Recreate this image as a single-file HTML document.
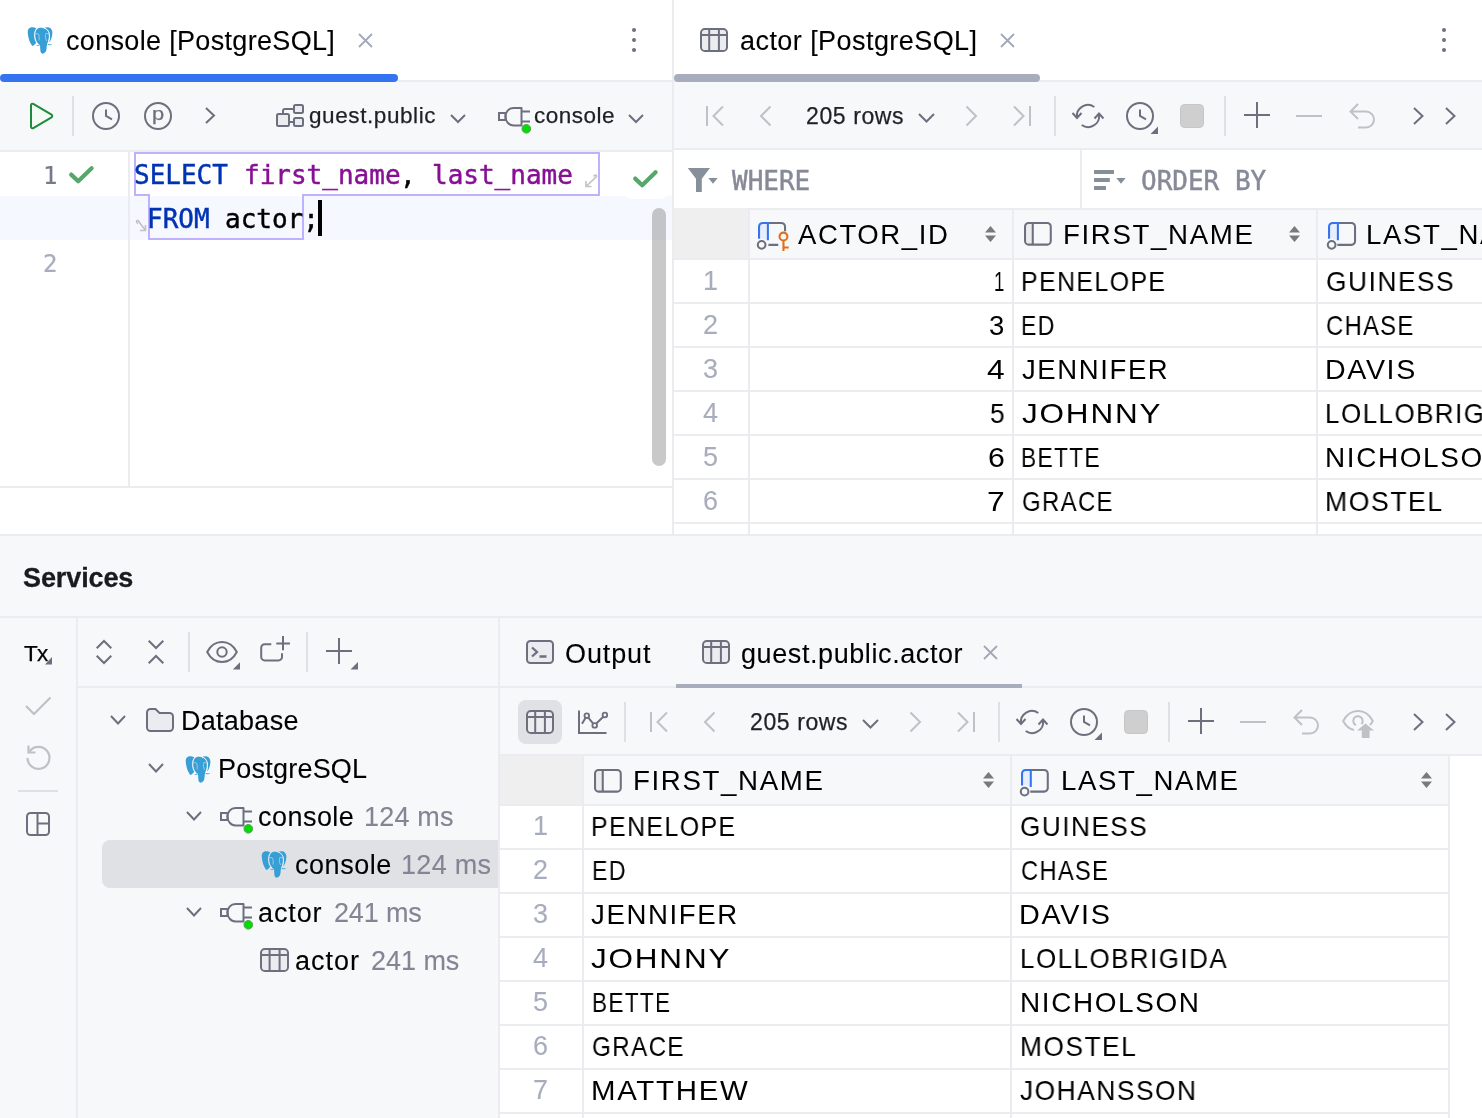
<!DOCTYPE html><html><head><meta charset="utf-8"><title>DataGrip</title><style>
*{box-sizing:border-box;margin:0;padding:0}
html,body{width:1482px;height:1118px;overflow:hidden;background:#fff}
body{position:relative;font-family:"Liberation Sans",sans-serif;color:#000;-webkit-font-smoothing:antialiased}
.a{position:absolute}
.t{position:absolute;white-space:pre;line-height:1;will-change:transform}
.ui{font-size:26px}
.mono{font-family:"Liberation Mono",monospace}
.h{font-family:"Liberation Sans",sans-serif;font-size:27px;letter-spacing:1.2px;color:#000}
.rn{font-family:"Liberation Sans",sans-serif;font-size:26px;color:#a8adbd}
svg{position:absolute;overflow:visible}
</style></head><body>
<div class="a" style="left:0px;top:82px;width:1482px;height:68px;background:#f7f8fa;"></div>
<div class="a" style="left:0px;top:150px;width:672px;height:2px;background:#ebecf0;"></div>
<div class="a" style="left:674px;top:148px;width:808px;height:2px;background:#ebecf0;"></div>
<div class="a" style="left:674px;top:150px;width:808px;height:2px;background:#fff;"></div>
<div class="a" style="left:672px;top:0px;width:2px;height:536px;background:#ebecf0;"></div>
<div class="a" style="left:398px;top:80px;width:1084px;height:2px;background:#ebecf0;"></div>
<div class="a" style="left:0px;top:74px;width:398px;height:8px;background:#3574f0;border-radius:4px"></div>
<div class="a" style="left:674px;top:74px;width:366px;height:8px;background:#a8adbd;border-radius:4px"></div>
<svg style="left:27px;top:26.7px" width="26.0" height="27.0" viewBox="0 0 26 27" fill="none"><g fill="#389fd6">
<path d="M5 .3C2 .3.5 2.5.8 6c.4 5 2.2 10.5 4.7 13 1.5-.5 3-2.500 3.800-3.500C7.500 13 7 9 7.500 6c.3-2 1-3.500 2-4.500C8 .6 6.500.3 5 .3z"/>
<path d="M13.500.8C10.500.8 8.300 3.500 8.200 7.500 8.100 11 9 14 11 16.500l2 1.500c.2 2 .2 4 .4 6 .3 2 1.600 2.800 2.800 2.600 1.800-.3 3.100-2.100 3.300-4.600.2-2 .3-4 .8-5.500 1.200-2.500 2.200-6.500 1.500-10C21 3 17.500.8 13.500.8z"/>
<path d="M17.500.8c1.500-.8 4.500-.8 6 .4 2 1.600 2.300 4.300 1.500 7.800-.5 2.500-1.500 5-2.800 6.500.8-3.500 1.100-7 .3-9.500C21.800 3.500 19.500 1.500 17.500.8z"/>
<path d="M8.500 18.600c1.500 0 3-.7 4-1.300l.3 1c-1 .8-2.800 1-4.300.3zM20.800 16.800c1.200.7 3 .8 4.400.2-.7 1.300-3.200 1.600-4.600.8z"/>
</g>
<g stroke="#fff" stroke-width=".55" fill="none" opacity=".85">
<path d="M9.600 1.600C8 3.300 7.200 6 7.400 9c.2 2.500.8 4.800 2 6.600l1.500 1.300M7.900 7.600c.8-1.300 3.100-1.400 3.900 0 .5 1.500.5 4.500.2 6"/>
<path d="M17.300.9c2.200.8 4 2.600 4.700 5 .7 2.800.3 6.500-.8 9.600l-.8 1.200M18 7.300c1-1.100 3-1 3.500.2M18.600 7.500c-.5 1.500 0 4.500 1 6.500"/>
</g></svg>
<div class="t" style="left:66.05px;top:28.34px;font-family:'Liberation Sans',sans-serif;font-size:27px;color:#000;-webkit-text-stroke:0.1px #000;letter-spacing:0.328px;">console [PostgreSQL]</div>
<svg style="left:359.1px;top:33.6px" width="13.0" height="13.0" viewBox="0 0 13.0 13.0" fill="none"><path d="M0 0L13.0 13.0M13.0 0L0 13.0" stroke="#a3a8b8" stroke-width="1.8"/></svg>
<svg style="left:631px;top:27px" width="6" height="26" viewBox="0 0 6 26" fill="none"><circle cx="3" cy="3" r="2" fill="#6c707e"/><circle cx="3" cy="13" r="2" fill="#6c707e"/><circle cx="3" cy="23" r="2" fill="#6c707e"/></svg>
<svg style="left:700px;top:28px" width="28" height="24" viewBox="0 0 28 24" fill="none"><rect x="1" y="1" width="26" height="22" rx="3.800" fill="#ebecf0" stroke="#6c707e" stroke-width="2"/><path d="M1 7H27M9.2 1V23M18.9 1V23" stroke="#6c707e" stroke-width="2"/></svg>
<div class="t" style="left:739.85px;top:28.34px;font-family:'Liberation Sans',sans-serif;font-size:27px;color:#000;-webkit-text-stroke:0.1px #000;letter-spacing:0.439px;">actor [PostgreSQL]</div>
<svg style="left:1001.1px;top:33.6px" width="13.0" height="13.0" viewBox="0 0 13.0 13.0" fill="none"><path d="M0 0L13.0 13.0M13.0 0L0 13.0" stroke="#a3a8b8" stroke-width="1.8"/></svg>
<svg style="left:1441px;top:27px" width="6" height="26" viewBox="0 0 6 26" fill="none"><circle cx="3" cy="3" r="2" fill="#6c707e"/><circle cx="3" cy="13" r="2" fill="#6c707e"/><circle cx="3" cy="23" r="2" fill="#6c707e"/></svg>
<svg style="left:28px;top:101px" width="27" height="30" viewBox="0 0 27 30" fill="none"><path d="M3 4.200V25.800a1.500 1.500 0 0 0 2.300 1.300L23.500 16.300a1.500 1.500 0 0 0 0-2.600L5.300 2.900A1.500 1.500 0 0 0 3 4.200z" fill="#f2fcf3" stroke="#208a3c" stroke-width="2" stroke-linejoin="round"/></svg>
<div class="a" style="left:72px;top:96px;width:2px;height:40px;background:#dfe1e7;"></div>
<svg style="left:92px;top:102px" width="28" height="28" viewBox="0 0 28 28" fill="none"><circle cx="14" cy="14" r="13" stroke="#6c707e" stroke-width="2"/><path d="M14 7.500V14l6 3.300" stroke="#6c707e" stroke-width="2"/></svg>
<svg style="left:144px;top:102px" width="28" height="28" viewBox="0 0 28 28" fill="none"><circle cx="14" cy="14" r="13" stroke="#6c707e" stroke-width="2"/></svg>
<div class="t" style="left:151.60px;top:105.98px;font-family:'Liberation Sans',sans-serif;font-size:17.5px;color:#6c707e;-webkit-text-stroke:0.25px #6c707e;transform-origin:0 0;transform:scaleX(1.25);">p</div>
<svg style="left:205.5px;top:108.1px" width="8" height="15" viewBox="0 0 8 15" fill="none"><path d="M0 0L8 7.5L0 15" stroke="#6c707e" stroke-width="2" stroke-linejoin="miter"/></svg>
<svg style="left:276px;top:102px" width="28" height="28" viewBox="0 0 28 28" fill="none"><rect x="1" y="12" width="12" height="12" rx="1.500" fill="#ebecf0" stroke="#6c707e" stroke-width="2"/><rect x="18" y="3" width="9" height="8" rx="1.500" fill="#ebecf0" stroke="#6c707e" stroke-width="2"/><rect x="18" y="16" width="9" height="8" rx="1.500" fill="#ebecf0" stroke="#6c707e" stroke-width="2"/><path d="M7 12V9a2 2 0 0 1 2-2h9M13 20h5" stroke="#6c707e" stroke-width="2"/></svg>
<div class="t" style="left:309.06px;top:105.35px;font-family:'Liberation Sans',sans-serif;font-size:22.5px;color:#1f2024;-webkit-text-stroke:0.25px #1f2024;letter-spacing:0.587px;">guest.public</div>
<svg style="left:451px;top:114.5px" width="14" height="7" viewBox="0 0 14 7" fill="none"><path d="M0 0L7.0 7L14 0" stroke="#6c707e" stroke-width="2"/></svg>
<svg style="left:498px;top:106.5px" width="32" height="27" viewBox="0 0 32 27" fill="none"><rect x="1" y="6" width="6.500" height="7" stroke="#6c707e" stroke-width="2"/><path d="M23.500 1H15.500C10.500 1 7.500 5 7.500 9.500S10.500 18.500 15.500 18.500H23.500z" stroke="#6c707e" stroke-width="2" stroke-linejoin="round"/><path d="M23.500 4.500H32M23.500 14.500H32" stroke="#6c707e" stroke-width="2"/><circle cx="28.300" cy="21.800" r="4.300" fill="#00dd00" stroke="#5c9c5c" stroke-width="1"/></svg>
<div class="t" style="left:534.04px;top:105.35px;font-family:'Liberation Sans',sans-serif;font-size:22.5px;color:#1f2024;-webkit-text-stroke:0.25px #1f2024;letter-spacing:0.484px;">console</div>
<svg style="left:629px;top:114.5px" width="14" height="7" viewBox="0 0 14 7" fill="none"><path d="M0 0L7.0 7L14 0" stroke="#6c707e" stroke-width="2"/></svg>
<div class="a" style="left:0px;top:196px;width:672px;height:44px;background:#f5f8fe;"></div>
<div class="a" style="left:128px;top:152px;width:2px;height:334px;background:#ebecf0;"></div>
<div class="a" style="left:0px;top:486px;width:672px;height:2px;background:#ebecf0;"></div>
<svg style="left:0px;top:0px" width="700" height="300" viewBox="0 0 700 300" fill="none"><path d="M135 153H599V195H303V239H149V195H135z" stroke="#bfb1fb" stroke-width="2" fill="none"/></svg>
<div class="t" style="left:134.20px;top:161.70px;font-family:'DejaVu Sans Mono','Liberation Mono',monospace;font-size:26px;color:#0033b3;-webkit-text-stroke:0.45px #0033b3;">SELECT</div>
<div class="t" style="left:243.77px;top:161.70px;font-family:'DejaVu Sans Mono','Liberation Mono',monospace;font-size:26px;color:#871094;-webkit-text-stroke:0.45px #871094;">first_name</div>
<div class="t" style="left:400.30px;top:161.70px;font-family:'DejaVu Sans Mono','Liberation Mono',monospace;font-size:26px;color:#000;-webkit-text-stroke:0.45px #000;">,</div>
<div class="t" style="left:431.61px;top:161.70px;font-family:'DejaVu Sans Mono','Liberation Mono',monospace;font-size:26px;color:#871094;-webkit-text-stroke:0.45px #871094;">last_name</div>
<div class="t" style="left:147.20px;top:205.70px;font-family:'DejaVu Sans Mono','Liberation Mono',monospace;font-size:26px;color:#0033b3;-webkit-text-stroke:0.45px #0033b3;">FROM</div>
<div class="t" style="left:225.47px;top:205.70px;font-family:'DejaVu Sans Mono','Liberation Mono',monospace;font-size:26px;color:#000;-webkit-text-stroke:0.45px #000;">actor;</div>
<div class="a" style="left:318px;top:200px;width:4px;height:36px;background:#000;"></div>
<div class="t" style="left:42.50px;top:163.69px;font-family:'DejaVu Sans Mono','Liberation Mono',monospace;font-size:24px;color:#767a8a;-webkit-text-stroke:0.2px #767a8a;">1</div>
<div class="t" style="left:42.50px;top:251.69px;font-family:'DejaVu Sans Mono','Liberation Mono',monospace;font-size:24px;color:#a8adbd;-webkit-text-stroke:0.2px #a8adbd;">2</div>
<svg style="left:69px;top:166px" width="25" height="18" viewBox="0 0 25 18" fill="none"><path d="M2.200 8.600L9.200 15.200L22.600 2.200" stroke="#55a76a" stroke-width="4.2" stroke-linecap="round" stroke-linejoin="round" fill="none"/></svg>
<div class="a" style="left:624px;top:152px;width:44px;height:47px;background:#fff;border-radius:0 0 8px 8px"></div>
<svg style="left:633px;top:169.9px" width="25" height="18" viewBox="0 0 25 18" fill="none"><path d="M2.200 8.600L9.200 15.200L22.600 2.200" stroke="#55a76a" stroke-width="4.2" stroke-linecap="round" stroke-linejoin="round" fill="none"/></svg>
<svg style="left:584px;top:174px" width="14" height="14" viewBox="0 0 14 14" fill="none"><path d="M9.500 2.500C10.500 .500 13 .500 12.500 2.500L2 12.500M2 7V12.500H7.500" stroke="#c2c2c4" stroke-width="1.600" fill="none"/></svg>
<svg style="left:135px;top:219px" width="12" height="13" viewBox="0 0 12 13" fill="none"><path d="M3 4.500C1 3.500 1 1 3 1.500L10.500 11.500M10.500 6V11.500H5" stroke="#c2c2c4" stroke-width="1.600" fill="none"/></svg>
<div class="a" style="left:652px;top:208px;width:14px;height:258px;background:rgba(100,100,100,.35);border-radius:7px"></div>
<svg style="left:706px;top:106px" width="18" height="20" viewBox="0 0 18 20" fill="none"><path d="M1 0V20M17 .500L7.500 10L17 19.500" stroke="#c0c1c6" stroke-width="2"/></svg>
<svg style="left:760px;top:106px" width="11" height="20" viewBox="0 0 11 20" fill="none"><path d="M10.500 .500L1 10L10.500 19.500" stroke="#c0c1c6" stroke-width="2"/></svg>
<div class="t" style="left:805.84px;top:105.33px;font-family:'Liberation Sans',sans-serif;font-size:23px;color:#1f2024;-webkit-text-stroke:0.25px #1f2024;letter-spacing:0.595px;">205 rows</div>
<svg style="left:918.5px;top:114.25px" width="15" height="7.5" viewBox="0 0 15 7.5" fill="none"><path d="M0 0L7.5 7.5L15 0" stroke="#6c707e" stroke-width="2"/></svg>
<svg style="left:965.5px;top:106px" width="11" height="20" viewBox="0 0 11 20" fill="none"><path d="M.500 .500L10 10L.500 19.500" stroke="#c0c1c6" stroke-width="2"/></svg>
<svg style="left:1013px;top:106px" width="18" height="20" viewBox="0 0 18 20" fill="none"><path d="M17 0V20M1 .500L10.500 10L1 19.500" stroke="#c0c1c6" stroke-width="2"/></svg>
<div class="a" style="left:1054px;top:96px;width:2px;height:40px;background:#dfe1e7;"></div>
<svg style="left:1072px;top:102px" width="32" height="28" viewBox="0 0 32 28" fill="none"><path d="M22.300 5A11 11 0 0 0 5 15.500M9.700 23A11 11 0 0 0 27 12.500" stroke="#6c707e" stroke-width="2" fill="none"/><path d="M.500 11L5 16L9.500 11M22.500 16.500L27 11.500L31.500 16.500" stroke="#6c707e" stroke-width="2" fill="none"/></svg>
<svg style="left:1126px;top:102px" width="28" height="28" viewBox="0 0 28 28" fill="none"><circle cx="14" cy="14" r="13" stroke="#6c707e" stroke-width="2"/><path d="M14 7.500V14l6 3.300" stroke="#6c707e" stroke-width="2"/><path d="M32 24.500V32h-7.500z" fill="#6c707e"/></svg>
<div class="a" style="left:1180px;top:104px;width:24px;height:24px;background:#cfcfcf;border-radius:4.500px;border:1.500px solid #c6c6c6"></div>
<div class="a" style="left:1224px;top:96px;width:2px;height:40px;background:#dfe1e7;"></div>
<svg style="left:1244px;top:102px" width="26" height="26" viewBox="0 0 26 26" fill="none"><path d="M13 0V26M0 13H26" stroke="#6c707e" stroke-width="2"/></svg>
<div class="a" style="left:1296px;top:114.5px;width:26px;height:2px;background:#c0c1c6;"></div>
<svg style="left:1349px;top:102.5px" width="27" height="26" viewBox="0 0 27 26" fill="none"><path d="M9 1L1.500 8.500L9 16M1.500 8.500H17A8 8 0 0 1 17 24.500H9" stroke="#c0c1c6" stroke-width="2" fill="none"/></svg>
<svg style="left:1413.5px;top:108.0px" width="8.5" height="16" viewBox="0 0 8.5 16" fill="none"><path d="M0 0L8.5 8.0L0 16" stroke="#6c707e" stroke-width="2" stroke-linejoin="miter"/></svg>
<svg style="left:1445.5px;top:108.0px" width="8.5" height="16" viewBox="0 0 8.5 16" fill="none"><path d="M0 0L8.5 8.0L0 16" stroke="#6c707e" stroke-width="2" stroke-linejoin="miter"/></svg>
<svg style="left:687px;top:168px" width="32" height="25" viewBox="0 0 32 25" fill="none"><path d="M.800 0H23L14.800 10.800V24H9V10.800z" fill="#868f9a"/><path d="M21.300 10H30.700L26 15.800z" fill="#868f9a"/></svg>
<div class="t" style="left:732.00px;top:167.70px;font-family:'DejaVu Sans Mono','Liberation Mono',monospace;font-size:26px;color:#868a98;-webkit-text-stroke:0.45px #868a98;">WHERE</div>
<div class="a" style="left:1080px;top:150px;width:2px;height:58px;background:#ebecf0;"></div>
<svg style="left:1094px;top:170px" width="33" height="20" viewBox="0 0 33 20" fill="none"><path d="M0 0H20V4H0zM0 8H15.800V12H0zM0 16H12V20H0zM22.300 8H31.700L27 13.800z" fill="#868f9a"/></svg>
<div class="t" style="left:1141.00px;top:167.70px;font-family:'DejaVu Sans Mono','Liberation Mono',monospace;font-size:26px;color:#868a98;-webkit-text-stroke:0.45px #868a98;">ORDER BY</div>
<div class="a" style="left:674px;top:208px;width:808px;height:2px;background:#ebecf0;"></div>
<div class="a" style="left:674px;top:210px;width:808px;height:48px;background:#f7f8fa;"></div>
<div class="a" style="left:674px;top:208px;width:74px;height:50px;background:#efefef;"></div>
<div class="a" style="left:674px;top:258px;width:808px;height:2px;background:#ebecf0;"></div>
<div class="a" style="left:674px;top:302px;width:808px;height:2px;background:#ebecf0;"></div>
<div class="a" style="left:674px;top:346px;width:808px;height:2px;background:#ebecf0;"></div>
<div class="a" style="left:674px;top:390px;width:808px;height:2px;background:#ebecf0;"></div>
<div class="a" style="left:674px;top:434px;width:808px;height:2px;background:#ebecf0;"></div>
<div class="a" style="left:674px;top:478px;width:808px;height:2px;background:#ebecf0;"></div>
<div class="a" style="left:674px;top:522px;width:808px;height:2px;background:#ebecf0;"></div>
<div class="a" style="left:748px;top:208px;width:2px;height:328px;background:#ebecf0;"></div>
<div class="a" style="left:1012px;top:208px;width:2px;height:328px;background:#ebecf0;"></div>
<div class="a" style="left:1316px;top:208px;width:2px;height:328px;background:#ebecf0;"></div>
<svg style="left:758px;top:221.5px" width="28.080000000000002" height="23.92" viewBox="0 0 27 23" fill="none"><path d="M1 15V4.500A3.500 3.500 0 0 1 4.500 1H9.500V17H7" fill="#e7effd"/><path d="M9.500 1H22.500A3.500 3.500 0 0 1 26 4.500V9M19.500 22H10" stroke="#6c707e" stroke-width="2"/><path d="M1 16V4.500A3.500 3.500 0 0 1 4.500 1H9.500V17.500" stroke="#3574f0" stroke-width="2" fill="none"/><circle cx="3.500" cy="22" r="3.700" fill="#f7f8fa" stroke="#6c707e" stroke-width="2"/><circle cx="24.500" cy="14" r="3.800" fill="#f7f8fa" stroke="#e66d17" stroke-width="2"/><path d="M24.500 18V28M24.500 24.500H29.500" stroke="#e66d17" stroke-width="2"/></svg>
<div class="t" style="left:797.95px;top:221.32px;font-family:'Liberation Sans',sans-serif;font-size:27.5px;color:#000;letter-spacing:1.600px;transform-origin:0 0;transform:scaleX(1.0008);">ACTOR_ID</div>
<svg style="left:984.5px;top:226px" width="11" height="16" viewBox="0 0 11 16" fill="none"><path d="M5.500 0L11 6.500H0zM5.500 16L0 9.500H11z" fill="#7a7a7a"/></svg>
<svg style="left:1023.8px;top:222px" width="27.810000000000002" height="23.69" viewBox="0 0 27 23" fill="none"><path d="M1 4.500A3.500 3.500 0 0 1 4.500 1H8.500V22H4.500A3.500 3.500 0 0 1 1 18.500z" fill="#ebecf0"/><rect x="1" y="1" width="25" height="21" rx="3.500" stroke="#6c707e" stroke-width="2"/><path d="M8.500 1V22" stroke="#6c707e" stroke-width="2"/></svg>
<div class="t" style="left:1062.73px;top:221.32px;font-family:'Liberation Sans',sans-serif;font-size:27.5px;color:#000;letter-spacing:1.600px;transform-origin:0 0;transform:scaleX(1.0073);">FIRST_NAME</div>
<svg style="left:1288.5px;top:226px" width="11" height="16" viewBox="0 0 11 16" fill="none"><path d="M5.500 0L11 6.500H0zM5.500 16L0 9.500H11z" fill="#7a7a7a"/></svg>
<svg style="left:1328px;top:221.8px" width="28.080000000000002" height="23.92" viewBox="0 0 27 23" fill="none"><path d="M1 15V4.500A3.500 3.500 0 0 1 4.500 1H9.500V17H7" fill="#e7effd"/><path d="M9.500 1H22.500A3.500 3.500 0 0 1 26 4.500V18.5A3.500 3.500 0 0 1 22.500 22H9" stroke="#6c707e" stroke-width="2"/><path d="M1 16V4.500A3.500 3.500 0 0 1 4.500 1H9.500V17.500" stroke="#3574f0" stroke-width="2" fill="none"/><circle cx="3.500" cy="22" r="3.700" fill="#f7f8fa" stroke="#6c707e" stroke-width="2"/></svg>
<div class="a" style="left:1360px;top:205px;width:122px;height:55px;overflow:hidden">
<div class="t" style="left:6.34px;top:16.32px;font-family:'Liberation Sans',sans-serif;font-size:27.5px;color:#000;letter-spacing:1.600px;transform-origin:0 0;transform:scaleX(1.0035);">LAST_NAME</div>
</div>
<div class="a" style="left:674px;top:260px;width:808px;height:274px;overflow:hidden">
<div class="t" style="left:29.49px;top:8.14px;font-family:'Liberation Sans',sans-serif;font-size:27px;color:#a8adbd;-webkit-text-stroke:0.1px #a8adbd;">1</div>
<div class="t" style="left:320.09px;top:7.72px;font-family:'Liberation Sans',sans-serif;font-size:27.5px;color:#000;letter-spacing:1.600px;transform-origin:0 0;transform:scaleX(0.6747);">1</div>
<div class="t" style="left:347.26px;top:7.72px;font-family:'Liberation Sans',sans-serif;font-size:27.5px;color:#000;letter-spacing:1.600px;transform-origin:0 0;transform:scaleX(0.9031);">PENELOPE</div>
<div class="t" style="left:652.08px;top:7.72px;font-family:'Liberation Sans',sans-serif;font-size:27.5px;color:#000;letter-spacing:1.600px;transform-origin:0 0;transform:scaleX(0.9569);">GUINESS</div>
<div class="t" style="left:29.49px;top:52.14px;font-family:'Liberation Sans',sans-serif;font-size:27px;color:#a8adbd;-webkit-text-stroke:0.1px #a8adbd;">2</div>
<div class="t" style="left:315.46px;top:51.72px;font-family:'Liberation Sans',sans-serif;font-size:27.5px;color:#000;letter-spacing:1.600px;transform-origin:0 0;transform:scaleX(0.9971);">3</div>
<div class="t" style="left:347.41px;top:51.72px;font-family:'Liberation Sans',sans-serif;font-size:27.5px;color:#000;letter-spacing:1.600px;transform-origin:0 0;transform:scaleX(0.8363);">ED</div>
<div class="t" style="left:652.19px;top:51.72px;font-family:'Liberation Sans',sans-serif;font-size:27.5px;color:#000;letter-spacing:1.600px;transform-origin:0 0;transform:scaleX(0.8634);">CHASE</div>
<div class="t" style="left:29.49px;top:96.14px;font-family:'Liberation Sans',sans-serif;font-size:27px;color:#a8adbd;-webkit-text-stroke:0.1px #a8adbd;">3</div>
<div class="t" style="left:312.77px;top:95.72px;font-family:'Liberation Sans',sans-serif;font-size:27.5px;color:#000;letter-spacing:1.600px;transform-origin:0 0;transform:scaleX(1.1546);">4</div>
<div class="t" style="left:347.57px;top:95.72px;font-family:'Liberation Sans',sans-serif;font-size:27.5px;color:#000;letter-spacing:1.600px;transform-origin:0 0;transform:scaleX(1.0004);">JENNIFER</div>
<div class="t" style="left:651.06px;top:95.72px;font-family:'Liberation Sans',sans-serif;font-size:27.5px;color:#000;letter-spacing:1.600px;transform-origin:0 0;transform:scaleX(1.0388);">DAVIS</div>
<div class="t" style="left:29.49px;top:140.14px;font-family:'Liberation Sans',sans-serif;font-size:27px;color:#a8adbd;-webkit-text-stroke:0.1px #a8adbd;">4</div>
<div class="t" style="left:315.94px;top:139.72px;font-family:'Liberation Sans',sans-serif;font-size:27.5px;color:#000;letter-spacing:1.600px;transform-origin:0 0;transform:scaleX(0.9587);">5</div>
<div class="t" style="left:347.51px;top:139.72px;font-family:'Liberation Sans',sans-serif;font-size:27.5px;color:#000;letter-spacing:1.600px;transform-origin:0 0;transform:scaleX(1.1439);">JOHNNY</div>
<div class="t" style="left:651.27px;top:139.72px;font-family:'Liberation Sans',sans-serif;font-size:27.5px;color:#000;letter-spacing:1.600px;transform-origin:0 0;transform:scaleX(0.9423);">LOLLOBRIGIDA</div>
<div class="t" style="left:29.49px;top:184.14px;font-family:'Liberation Sans',sans-serif;font-size:27px;color:#a8adbd;-webkit-text-stroke:0.1px #a8adbd;">5</div>
<div class="t" style="left:313.96px;top:183.72px;font-family:'Liberation Sans',sans-serif;font-size:27.5px;color:#000;letter-spacing:1.600px;transform-origin:0 0;transform:scaleX(1.1033);">6</div>
<div class="t" style="left:347.44px;top:183.72px;font-family:'Liberation Sans',sans-serif;font-size:27.5px;color:#000;letter-spacing:1.600px;transform-origin:0 0;transform:scaleX(0.8265);">BETTE</div>
<div class="t" style="left:651.11px;top:183.72px;font-family:'Liberation Sans',sans-serif;font-size:27.5px;color:#000;letter-spacing:1.600px;transform-origin:0 0;transform:scaleX(1.0151);">NICHOLSON</div>
<div class="t" style="left:29.49px;top:228.14px;font-family:'Liberation Sans',sans-serif;font-size:27px;color:#a8adbd;-webkit-text-stroke:0.1px #a8adbd;">6</div>
<div class="t" style="left:313.36px;top:227.72px;font-family:'Liberation Sans',sans-serif;font-size:27.5px;color:#000;letter-spacing:1.600px;transform-origin:0 0;transform:scaleX(1.1599);">7</div>
<div class="t" style="left:348.10px;top:227.72px;font-family:'Liberation Sans',sans-serif;font-size:27.5px;color:#000;letter-spacing:1.600px;transform-origin:0 0;transform:scaleX(0.8688);">GRACE</div>
<div class="t" style="left:651.22px;top:227.72px;font-family:'Liberation Sans',sans-serif;font-size:27.5px;color:#000;letter-spacing:1.600px;transform-origin:0 0;transform:scaleX(0.9677);">MOSTEL</div>
</div>
<div class="a" style="left:0px;top:534px;width:1482px;height:2px;background:#ebecf0;"></div>
<div class="a" style="left:0px;top:536px;width:1482px;height:582px;background:#f7f8fa;"></div>
<div class="t" style="left:23.22px;top:564.64px;font-family:'Liberation Sans',sans-serif;font-size:27px;color:#1a1b1e;font-weight:700;-webkit-text-stroke:0.3px #1a1b1e;letter-spacing:-0.102px;">Services</div>
<div class="a" style="left:0px;top:616px;width:1482px;height:2px;background:#ebecf0;"></div>
<div class="a" style="left:76px;top:618px;width:2px;height:500px;background:#ebecf0;"></div>
<div class="a" style="left:78px;top:686px;width:1404px;height:2px;background:#ebecf0;"></div>
<div class="a" style="left:498px;top:618px;width:2px;height:500px;background:#ebecf0;"></div>
<div class="t" style="left:24.49px;top:642.65px;font-family:'Liberation Sans',sans-serif;font-size:22.5px;color:#000;-webkit-text-stroke:0.25px #000;letter-spacing:-0.747px;">Tx</div>
<svg style="left:45px;top:656.5px" width="7" height="7.5" viewBox="0 0 7 7.5" fill="none"><path d="M7 0V7.500H0z" fill="#6c707e"/></svg>
<svg style="left:25px;top:696px" width="27" height="20" viewBox="0 0 27 20" fill="none"><path d="M1 10L9 18L25.500 1.500" stroke="#c0c1c6" stroke-width="2.200" fill="none"/></svg>
<svg style="left:25px;top:744px" width="27" height="27" viewBox="0 0 27 27" fill="none"><path d="M4.500 7.500A11 11 0 1 1 2.500 14" stroke="#c0c1c6" stroke-width="2.200" fill="none"/><path d="M3.500 1.500V8.500H10.500" stroke="#c0c1c6" stroke-width="2.200" fill="none"/></svg>
<div class="a" style="left:18px;top:790px;width:40px;height:2px;background:#dfe1e7;"></div>
<svg style="left:26px;top:812px" width="24" height="24" viewBox="0 0 24 24" fill="none"><rect x="1" y="1" width="22" height="22" rx="3.500" stroke="#6c707e" stroke-width="2"/><path d="M11.500 1V23M11.500 11.500H23" stroke="#6c707e" stroke-width="2"/></svg>
<svg style="left:96px;top:640px" width="16" height="24" viewBox="0 0 16 24" fill="none"><path d="M.700 8.200L8 1L15.300 8.200M.700 15.800L8 23L15.300 15.800" stroke="#6c707e" stroke-width="2" fill="none"/></svg>
<svg style="left:148px;top:640px" width="16" height="24" viewBox="0 0 16 24" fill="none"><path d="M.700 .800L8 8L15.300 .800M.700 23.200L8 16L15.300 23.200" stroke="#6c707e" stroke-width="2" fill="none"/></svg>
<div class="a" style="left:188px;top:632px;width:2px;height:40px;background:#dfe1e7;"></div>
<svg style="left:206px;top:641px" width="34" height="29" viewBox="0 0 34 29" fill="none"><path d="M1.200 11C4.500 4.500 10 1 16 1S27.500 4.500 30.800 11C27.500 17.500 22 21 16 21S4.500 17.500 1.200 11z" stroke="#6c707e" stroke-width="2" fill="none"/><circle cx="16" cy="11" r="4.700" stroke="#6c707e" stroke-width="2"/><path d="M34 21.300V28.500H26.800z" fill="#6c707e"/></svg>
<svg style="left:260px;top:635px" width="31" height="28" viewBox="0 0 31 28" fill="none"><path d="M11.300 9.200H4.700A3.500 3.500 0 0 0 1.200 12.700V21.900A3.500 3.500 0 0 0 4.700 25.400H18.500A3.500 3.500 0 0 0 22 21.900V18.300" stroke="#6c707e" stroke-width="2" fill="none"/><path d="M23 1.100V15.300M16.300 8.400H30" stroke="#6c707e" stroke-width="2"/></svg>
<div class="a" style="left:306px;top:632px;width:2px;height:40px;background:#dfe1e7;"></div>
<svg style="left:326px;top:638px" width="26" height="26" viewBox="0 0 26 26" fill="none"><path d="M13 0V26M0 13H26" stroke="#6c707e" stroke-width="2"/><path d="M32 24V31.5H24.5z" fill="#6c707e"/></svg>
<div class="a" style="left:102px;top:840px;width:396px;height:48px;background:#dfe1e5;border-radius:8px 0 0 8px"></div>
<svg style="left:111px;top:716.25px" width="14" height="7.5" viewBox="0 0 14 7.5" fill="none"><path d="M0 0L7.0 7.5L14 0" stroke="#6c707e" stroke-width="2"/></svg>
<svg style="left:145.5px;top:708px" width="28" height="24" viewBox="0 0 28 24" fill="none"><path d="M1 4.500A3.500 3.500 0 0 1 4.500 1H9.500L13.500 5H23.500A3.500 3.500 0 0 1 27 8.500V19.500A3.500 3.500 0 0 1 23.500 23H4.500A3.500 3.500 0 0 1 1 19.500z" fill="#ebecf0" stroke="#6c707e" stroke-width="2"/></svg>
<div class="t" style="left:181.29px;top:707.74px;font-family:'Liberation Sans',sans-serif;font-size:27px;color:#000;-webkit-text-stroke:0.1px #000;letter-spacing:0.262px;">Database</div>
<svg style="left:149px;top:764.25px" width="14" height="7.5" viewBox="0 0 14 7.5" fill="none"><path d="M0 0L7.0 7.5L14 0" stroke="#6c707e" stroke-width="2"/></svg>
<svg style="left:185px;top:755.5px" width="26.0" height="27.0" viewBox="0 0 26 27" fill="none"><g fill="#389fd6">
<path d="M5 .3C2 .3.5 2.5.8 6c.4 5 2.2 10.5 4.7 13 1.5-.5 3-2.500 3.800-3.500C7.500 13 7 9 7.500 6c.3-2 1-3.500 2-4.500C8 .6 6.500.3 5 .3z"/>
<path d="M13.500.8C10.500.8 8.300 3.500 8.200 7.500 8.100 11 9 14 11 16.500l2 1.500c.2 2 .2 4 .4 6 .3 2 1.600 2.800 2.800 2.600 1.800-.3 3.100-2.100 3.300-4.600.2-2 .3-4 .8-5.500 1.200-2.500 2.200-6.500 1.500-10C21 3 17.500.8 13.500.8z"/>
<path d="M17.500.8c1.500-.8 4.500-.8 6 .4 2 1.600 2.300 4.300 1.500 7.800-.5 2.500-1.500 5-2.800 6.500.8-3.500 1.100-7 .3-9.500C21.800 3.500 19.500 1.500 17.500.8z"/>
<path d="M8.500 18.600c1.500 0 3-.7 4-1.300l.3 1c-1 .8-2.800 1-4.300.3zM20.800 16.800c1.200.7 3 .8 4.400.2-.7 1.300-3.200 1.600-4.600.8z"/>
</g>
<g stroke="#fff" stroke-width=".55" fill="none" opacity=".85">
<path d="M9.600 1.600C8 3.300 7.200 6 7.400 9c.2 2.500.8 4.800 2 6.600l1.500 1.300M7.900 7.600c.8-1.300 3.100-1.400 3.900 0 .5 1.500.5 4.500.2 6"/>
<path d="M17.300.9c2.200.8 4 2.600 4.700 5 .7 2.800.3 6.500-.8 9.600l-.8 1.200M18 7.300c1-1.100 3-1 3.500.2M18.600 7.500c-.5 1.500 0 4.500 1 6.500"/>
</g></svg>
<div class="t" style="left:217.79px;top:755.74px;font-family:'Liberation Sans',sans-serif;font-size:27px;color:#000;-webkit-text-stroke:0.1px #000;letter-spacing:0.226px;">PostgreSQL</div>
<svg style="left:187px;top:812.05px" width="14" height="7.5" viewBox="0 0 14 7.5" fill="none"><path d="M0 0L7.0 7.5L14 0" stroke="#6c707e" stroke-width="2"/></svg>
<svg style="left:220.2px;top:807px" width="32" height="27" viewBox="0 0 32 27" fill="none"><rect x="1" y="6" width="6.500" height="7" stroke="#6c707e" stroke-width="2"/><path d="M23.500 1H15.500C10.500 1 7.500 5 7.500 9.500S10.500 18.500 15.500 18.500H23.500z" stroke="#6c707e" stroke-width="2" stroke-linejoin="round"/><path d="M23.500 4.500H32M23.500 14.500H32" stroke="#6c707e" stroke-width="2"/><circle cx="28.300" cy="21.800" r="4.300" fill="#00dd00" stroke="#5c9c5c" stroke-width="1"/></svg>
<div class="t" style="left:257.85px;top:803.74px;font-family:'Liberation Sans',sans-serif;font-size:27px;color:#000;-webkit-text-stroke:0.1px #000;letter-spacing:0.464px;">console</div>
<div class="t" style="left:363.94px;top:803.74px;font-family:'Liberation Sans',sans-serif;font-size:27px;color:#818594;-webkit-text-stroke:0.1px #818594;letter-spacing:0.198px;">124 ms</div>
<svg style="left:260.8px;top:851px" width="26.0" height="27.0" viewBox="0 0 26 27" fill="none"><g fill="#389fd6">
<path d="M5 .3C2 .3.5 2.5.8 6c.4 5 2.2 10.5 4.7 13 1.5-.5 3-2.500 3.800-3.500C7.500 13 7 9 7.500 6c.3-2 1-3.500 2-4.500C8 .6 6.500.3 5 .3z"/>
<path d="M13.500.8C10.500.8 8.300 3.500 8.200 7.500 8.100 11 9 14 11 16.500l2 1.500c.2 2 .2 4 .4 6 .3 2 1.600 2.800 2.800 2.600 1.800-.3 3.100-2.100 3.300-4.600.2-2 .3-4 .8-5.500 1.200-2.500 2.200-6.500 1.500-10C21 3 17.500.8 13.500.8z"/>
<path d="M17.500.8c1.500-.8 4.500-.8 6 .4 2 1.600 2.300 4.300 1.500 7.800-.5 2.500-1.500 5-2.800 6.500.8-3.500 1.100-7 .3-9.500C21.800 3.500 19.500 1.500 17.500.8z"/>
<path d="M8.500 18.600c1.500 0 3-.7 4-1.300l.3 1c-1 .8-2.800 1-4.300.3zM20.800 16.800c1.200.7 3 .8 4.400.2-.7 1.300-3.200 1.600-4.600.8z"/>
</g>
<g stroke="#fff" stroke-width=".55" fill="none" opacity=".85">
<path d="M9.600 1.600C8 3.300 7.200 6 7.400 9c.2 2.500.8 4.800 2 6.600l1.500 1.300M7.900 7.600c.8-1.300 3.100-1.400 3.900 0 .5 1.500.5 4.500.2 6"/>
<path d="M17.300.9c2.200.8 4 2.600 4.700 5 .7 2.800.3 6.500-.8 9.600l-.8 1.200M18 7.300c1-1.100 3-1 3.500.2M18.600 7.500c-.5 1.500 0 4.500 1 6.500"/>
</g></svg>
<div class="t" style="left:295.35px;top:851.74px;font-family:'Liberation Sans',sans-serif;font-size:27px;color:#000;-webkit-text-stroke:0.1px #000;letter-spacing:0.547px;">console</div>
<div class="t" style="left:401.44px;top:851.74px;font-family:'Liberation Sans',sans-serif;font-size:27px;color:#818594;-webkit-text-stroke:0.1px #818594;letter-spacing:0.298px;">124 ms</div>
<svg style="left:187px;top:908.05px" width="14" height="7.5" viewBox="0 0 14 7.5" fill="none"><path d="M0 0L7.0 7.5L14 0" stroke="#6c707e" stroke-width="2"/></svg>
<svg style="left:220.2px;top:903px" width="32" height="27" viewBox="0 0 32 27" fill="none"><rect x="1" y="6" width="6.500" height="7" stroke="#6c707e" stroke-width="2"/><path d="M23.500 1H15.500C10.500 1 7.500 5 7.500 9.500S10.500 18.500 15.500 18.500H23.500z" stroke="#6c707e" stroke-width="2" stroke-linejoin="round"/><path d="M23.500 4.500H32M23.500 14.500H32" stroke="#6c707e" stroke-width="2"/><circle cx="28.300" cy="21.800" r="4.300" fill="#00dd00" stroke="#5c9c5c" stroke-width="1"/></svg>
<div class="t" style="left:257.85px;top:899.74px;font-family:'Liberation Sans',sans-serif;font-size:27px;color:#000;-webkit-text-stroke:0.1px #000;letter-spacing:0.892px;">actor</div>
<div class="t" style="left:333.64px;top:899.74px;font-family:'Liberation Sans',sans-serif;font-size:27px;color:#818594;-webkit-text-stroke:0.1px #818594;letter-spacing:-0.142px;">241 ms</div>
<svg style="left:260px;top:948px" width="29" height="24" viewBox="0 0 29 24" fill="none"><rect x="1" y="1" width="27" height="22" rx="3.800" fill="#ebecf0" stroke="#6c707e" stroke-width="2"/><path d="M1 7H28M9.6 1V23M19.6 1V23" stroke="#6c707e" stroke-width="2"/></svg>
<div class="t" style="left:295.35px;top:947.74px;font-family:'Liberation Sans',sans-serif;font-size:27px;color:#000;-webkit-text-stroke:0.1px #000;letter-spacing:1.017px;">actor</div>
<div class="t" style="left:371.14px;top:947.74px;font-family:'Liberation Sans',sans-serif;font-size:27px;color:#818594;-webkit-text-stroke:0.1px #818594;letter-spacing:-0.042px;">241 ms</div>
<svg style="left:526px;top:640px" width="28" height="24" viewBox="0 0 28 24" fill="none"><rect x="1" y="1" width="26" height="22" rx="3.500" fill="#ebecf0" stroke="#6c707e" stroke-width="2"/><path d="M6 7.500L11 12L6 16.500M13.500 16.500H20.500" stroke="#6c707e" stroke-width="2.300" fill="none"/></svg>
<div class="t" style="left:564.72px;top:640.74px;font-family:'Liberation Sans',sans-serif;font-size:27px;color:#000;-webkit-text-stroke:0.1px #000;letter-spacing:0.885px;">Output</div>
<svg style="left:702px;top:639.8px" width="28" height="24" viewBox="0 0 28 24" fill="none"><rect x="1" y="1" width="26" height="22" rx="3.800" fill="#ebecf0" stroke="#6c707e" stroke-width="2"/><path d="M1 7H27M9.2 1V23M18.9 1V23" stroke="#6c707e" stroke-width="2"/></svg>
<div class="t" style="left:740.87px;top:640.74px;font-family:'Liberation Sans',sans-serif;font-size:27px;color:#000;-webkit-text-stroke:0.1px #000;letter-spacing:0.586px;">guest.public.actor</div>
<svg style="left:983.5px;top:645.5px" width="13.0" height="13.0" viewBox="0 0 13.0 13.0" fill="none"><path d="M0 0L13.0 13.0M13.0 0L0 13.0" stroke="#a3a8b8" stroke-width="1.8"/></svg>
<div class="a" style="left:676px;top:684px;width:346px;height:4px;background:#a8adbd;"></div>
<div class="a" style="left:518px;top:700px;width:44px;height:44px;background:#dfe1e5;border-radius:8px"></div>
<svg style="left:526px;top:710px" width="28" height="24" viewBox="0 0 28 24" fill="none"><rect x="1" y="1" width="26" height="22" rx="3.800" fill="#ebecf0" stroke="#6c707e" stroke-width="2"/><path d="M1 7H27M9.2 1V23M18.9 1V23" stroke="#6c707e" stroke-width="2"/></svg>
<svg style="left:578px;top:709px" width="30" height="26" viewBox="0 0 30 26" fill="none"><path d="M1 1.500V24H28.500" stroke="#6c707e" stroke-width="2" fill="none"/><path d="M4 14.800L7.600 8.700M10.300 8.600L15.200 14.600M18.300 14.500L25.300 7.700" stroke="#6c707e" stroke-width="2" fill="none"/><circle cx="8.800" cy="6.700" r="2.300" stroke="#6c707e" stroke-width="1.800"/><circle cx="16.700" cy="16.400" r="2.300" stroke="#6c707e" stroke-width="1.800"/><circle cx="26.900" cy="6" r="2.300" stroke="#6c707e" stroke-width="1.800"/></svg>
<div class="a" style="left:624px;top:702px;width:2px;height:40px;background:#dfe1e7;"></div>
<svg style="left:650px;top:712px" width="18" height="20" viewBox="0 0 18 20" fill="none"><path d="M1 0V20M17 .500L7.500 10L17 19.500" stroke="#c0c1c6" stroke-width="2"/></svg>
<svg style="left:704px;top:712px" width="11" height="20" viewBox="0 0 11 20" fill="none"><path d="M10.500 .500L1 10L10.500 19.500" stroke="#c0c1c6" stroke-width="2"/></svg>
<div class="t" style="left:749.84px;top:711.13px;font-family:'Liberation Sans',sans-serif;font-size:23px;color:#1f2024;-webkit-text-stroke:0.25px #1f2024;letter-spacing:0.595px;">205 rows</div>
<svg style="left:862.5px;top:720.25px" width="15" height="7.5" viewBox="0 0 15 7.5" fill="none"><path d="M0 0L7.5 7.5L15 0" stroke="#6c707e" stroke-width="2"/></svg>
<svg style="left:909.5px;top:712px" width="11" height="20" viewBox="0 0 11 20" fill="none"><path d="M.500 .500L10 10L.500 19.500" stroke="#c0c1c6" stroke-width="2"/></svg>
<svg style="left:957px;top:712px" width="18" height="20" viewBox="0 0 18 20" fill="none"><path d="M17 0V20M1 .500L10.500 10L1 19.500" stroke="#c0c1c6" stroke-width="2"/></svg>
<div class="a" style="left:998px;top:702px;width:2px;height:40px;background:#dfe1e7;"></div>
<svg style="left:1016px;top:708px" width="32" height="28" viewBox="0 0 32 28" fill="none"><path d="M22.300 5A11 11 0 0 0 5 15.500M9.700 23A11 11 0 0 0 27 12.500" stroke="#6c707e" stroke-width="2" fill="none"/><path d="M.500 11L5 16L9.500 11M22.500 16.500L27 11.500L31.500 16.500" stroke="#6c707e" stroke-width="2" fill="none"/></svg>
<svg style="left:1070px;top:708px" width="28" height="28" viewBox="0 0 28 28" fill="none"><circle cx="14" cy="14" r="13" stroke="#6c707e" stroke-width="2"/><path d="M14 7.500V14l6 3.300" stroke="#6c707e" stroke-width="2"/><path d="M32 24.500V32h-7.500z" fill="#6c707e"/></svg>
<div class="a" style="left:1124px;top:710px;width:24px;height:24px;background:#cfcfcf;border-radius:4.500px;border:1.500px solid #c6c6c6"></div>
<div class="a" style="left:1168px;top:702px;width:2px;height:40px;background:#dfe1e7;"></div>
<svg style="left:1188px;top:708px" width="26" height="26" viewBox="0 0 26 26" fill="none"><path d="M13 0V26M0 13H26" stroke="#6c707e" stroke-width="2"/></svg>
<div class="a" style="left:1240px;top:720.5px;width:26px;height:2px;background:#c0c1c6;"></div>
<svg style="left:1293px;top:708.5px" width="27" height="26" viewBox="0 0 27 26" fill="none"><path d="M9 1L1.500 8.500L9 16M1.500 8.500H17A8 8 0 0 1 17 24.500H9" stroke="#c0c1c6" stroke-width="2" fill="none"/></svg>
<svg style="left:1342px;top:710px" width="34" height="30" viewBox="0 0 34 30" fill="none"><path d="M12 20C7.500 19 3.500 15.500 1.200 11C4.500 4.500 10 1 16 1S27.500 4.500 30.800 11C30 12.500 29 14 28 15" stroke="#c0c1c6" stroke-width="2" fill="none"/><path d="M19.500 14A4.700 4.700 0 1 0 14 15.200" stroke="#c0c1c6" stroke-width="2" fill="none"/><path d="M23.500 13.500L32 20.500H27.600V28H19.800V20.500H15z" fill="#c0c1c6"/></svg>
<svg style="left:1413.5px;top:714.0px" width="8.5" height="16" viewBox="0 0 8.5 16" fill="none"><path d="M0 0L8.5 8.0L0 16" stroke="#6c707e" stroke-width="2" stroke-linejoin="miter"/></svg>
<svg style="left:1445.5px;top:714.0px" width="8.5" height="16" viewBox="0 0 8.5 16" fill="none"><path d="M0 0L8.5 8.0L0 16" stroke="#6c707e" stroke-width="2" stroke-linejoin="miter"/></svg>
<div class="a" style="left:500px;top:754px;width:982px;height:2px;background:#ebecf0;"></div>
<div class="a" style="left:500px;top:756px;width:950px;height:48px;background:#f7f8fa;"></div>
<div class="a" style="left:500px;top:756px;width:82px;height:48px;background:#efefef;"></div>
<div class="a" style="left:1450px;top:756px;width:32px;height:362px;background:#fff;"></div>
<div class="a" style="left:500px;top:804px;width:950px;height:2px;background:#ebecf0;"></div>
<div class="a" style="left:500px;top:806px;width:950px;height:312px;background:#fff;"></div>
<div class="a" style="left:500px;top:848px;width:950px;height:2px;background:#ebecf0;"></div>
<div class="a" style="left:500px;top:892px;width:950px;height:2px;background:#ebecf0;"></div>
<div class="a" style="left:500px;top:936px;width:950px;height:2px;background:#ebecf0;"></div>
<div class="a" style="left:500px;top:980px;width:950px;height:2px;background:#ebecf0;"></div>
<div class="a" style="left:500px;top:1024px;width:950px;height:2px;background:#ebecf0;"></div>
<div class="a" style="left:500px;top:1068px;width:950px;height:2px;background:#ebecf0;"></div>
<div class="a" style="left:500px;top:1112px;width:950px;height:2px;background:#ebecf0;"></div>
<div class="a" style="left:582px;top:756px;width:2px;height:362px;background:#ebecf0;"></div>
<div class="a" style="left:1010px;top:756px;width:2px;height:362px;background:#ebecf0;"></div>
<div class="a" style="left:1448px;top:756px;width:2px;height:362px;background:#ebecf0;"></div>
<svg style="left:594px;top:768.5px" width="27.810000000000002" height="23.69" viewBox="0 0 27 23" fill="none"><path d="M1 4.500A3.500 3.500 0 0 1 4.500 1H8.500V22H4.500A3.500 3.500 0 0 1 1 18.500z" fill="#ebecf0"/><rect x="1" y="1" width="25" height="21" rx="3.500" stroke="#6c707e" stroke-width="2"/><path d="M8.500 1V22" stroke="#6c707e" stroke-width="2"/></svg>
<div class="t" style="left:632.73px;top:767.32px;font-family:'Liberation Sans',sans-serif;font-size:27.5px;color:#000;letter-spacing:1.600px;transform-origin:0 0;transform:scaleX(1.0073);">FIRST_NAME</div>
<svg style="left:982.5px;top:772px" width="11" height="16" viewBox="0 0 11 16" fill="none"><path d="M5.500 0L11 6.500H0zM5.500 16L0 9.500H11z" fill="#7a7a7a"/></svg>
<svg style="left:1021px;top:768.5px" width="27.810000000000002" height="23.69" viewBox="0 0 27 23" fill="none"><path d="M1 15V4.500A3.500 3.500 0 0 1 4.500 1H9.500V17H7" fill="#e7effd"/><path d="M9.500 1H22.500A3.500 3.500 0 0 1 26 4.500V18.5A3.500 3.500 0 0 1 22.500 22H9" stroke="#6c707e" stroke-width="2"/><path d="M1 16V4.500A3.500 3.500 0 0 1 4.500 1H9.500V17.500" stroke="#3574f0" stroke-width="2" fill="none"/><circle cx="3.500" cy="22" r="3.700" fill="#f7f8fa" stroke="#6c707e" stroke-width="2"/></svg>
<div class="t" style="left:1060.74px;top:767.32px;font-family:'Liberation Sans',sans-serif;font-size:27.5px;color:#000;letter-spacing:1.600px;transform-origin:0 0;transform:scaleX(1.0035);">LAST_NAME</div>
<svg style="left:1420.5px;top:772px" width="11" height="16" viewBox="0 0 11 16" fill="none"><path d="M5.500 0L11 6.500H0zM5.500 16L0 9.500H11z" fill="#7a7a7a"/></svg>
<div class="t" style="left:533.49px;top:813.44px;font-family:'Liberation Sans',sans-serif;font-size:27px;color:#a8adbd;-webkit-text-stroke:0.1px #a8adbd;">1</div>
<div class="t" style="left:591.46px;top:813.02px;font-family:'Liberation Sans',sans-serif;font-size:27.5px;color:#000;letter-spacing:1.600px;transform-origin:0 0;transform:scaleX(0.9037);">PENELOPE</div>
<div class="t" style="left:1020.49px;top:813.02px;font-family:'Liberation Sans',sans-serif;font-size:27.5px;color:#000;letter-spacing:1.600px;transform-origin:0 0;transform:scaleX(0.9500);">GUINESS</div>
<div class="t" style="left:533.49px;top:857.44px;font-family:'Liberation Sans',sans-serif;font-size:27px;color:#a8adbd;-webkit-text-stroke:0.1px #a8adbd;">2</div>
<div class="t" style="left:591.60px;top:857.02px;font-family:'Liberation Sans',sans-serif;font-size:27.5px;color:#000;letter-spacing:1.600px;transform-origin:0 0;transform:scaleX(0.8418);">ED</div>
<div class="t" style="left:1020.60px;top:857.02px;font-family:'Liberation Sans',sans-serif;font-size:27.5px;color:#000;letter-spacing:1.600px;transform-origin:0 0;transform:scaleX(0.8593);">CHASE</div>
<div class="t" style="left:533.49px;top:901.44px;font-family:'Liberation Sans',sans-serif;font-size:27px;color:#a8adbd;-webkit-text-stroke:0.1px #a8adbd;">3</div>
<div class="t" style="left:591.37px;top:901.02px;font-family:'Liberation Sans',sans-serif;font-size:27.5px;color:#000;letter-spacing:1.600px;transform-origin:0 0;transform:scaleX(1.0038);">JENNIFER</div>
<div class="t" style="left:1019.44px;top:901.02px;font-family:'Liberation Sans',sans-serif;font-size:27.5px;color:#000;letter-spacing:1.600px;transform-origin:0 0;transform:scaleX(1.0460);">DAVIS</div>
<div class="t" style="left:533.49px;top:945.44px;font-family:'Liberation Sans',sans-serif;font-size:27px;color:#a8adbd;-webkit-text-stroke:0.1px #a8adbd;">4</div>
<div class="t" style="left:591.31px;top:945.02px;font-family:'Liberation Sans',sans-serif;font-size:27.5px;color:#000;letter-spacing:1.600px;transform-origin:0 0;transform:scaleX(1.1431);">JOHNNY</div>
<div class="t" style="left:1019.67px;top:945.02px;font-family:'Liberation Sans',sans-serif;font-size:27.5px;color:#000;letter-spacing:1.600px;transform-origin:0 0;transform:scaleX(0.9423);">LOLLOBRIGIDA</div>
<div class="t" style="left:533.49px;top:989.44px;font-family:'Liberation Sans',sans-serif;font-size:27px;color:#a8adbd;-webkit-text-stroke:0.1px #a8adbd;">5</div>
<div class="t" style="left:591.65px;top:989.02px;font-family:'Liberation Sans',sans-serif;font-size:27.5px;color:#000;letter-spacing:1.600px;transform-origin:0 0;transform:scaleX(0.8211);">BETTE</div>
<div class="t" style="left:1019.51px;top:989.02px;font-family:'Liberation Sans',sans-serif;font-size:27.5px;color:#000;letter-spacing:1.600px;transform-origin:0 0;transform:scaleX(1.0151);">NICHOLSON</div>
<div class="t" style="left:533.49px;top:1033.44px;font-family:'Liberation Sans',sans-serif;font-size:27px;color:#a8adbd;-webkit-text-stroke:0.1px #a8adbd;">6</div>
<div class="t" style="left:592.28px;top:1033.02px;font-family:'Liberation Sans',sans-serif;font-size:27.5px;color:#000;letter-spacing:1.600px;transform-origin:0 0;transform:scaleX(0.8787);">GRACE</div>
<div class="t" style="left:1019.64px;top:1033.02px;font-family:'Liberation Sans',sans-serif;font-size:27.5px;color:#000;letter-spacing:1.600px;transform-origin:0 0;transform:scaleX(0.9567);">MOSTEL</div>
<div class="t" style="left:533.49px;top:1077.44px;font-family:'Liberation Sans',sans-serif;font-size:27px;color:#a8adbd;-webkit-text-stroke:0.1px #a8adbd;">7</div>
<div class="t" style="left:591.09px;top:1077.02px;font-family:'Liberation Sans',sans-serif;font-size:27.5px;color:#000;letter-spacing:1.600px;transform-origin:0 0;transform:scaleX(1.0692);">MATTHEW</div>
<div class="t" style="left:1020.09px;top:1077.02px;font-family:'Liberation Sans',sans-serif;font-size:27.5px;color:#000;letter-spacing:1.600px;transform-origin:0 0;transform:scaleX(0.9572);">JOHANSSON</div>
</body></html>
